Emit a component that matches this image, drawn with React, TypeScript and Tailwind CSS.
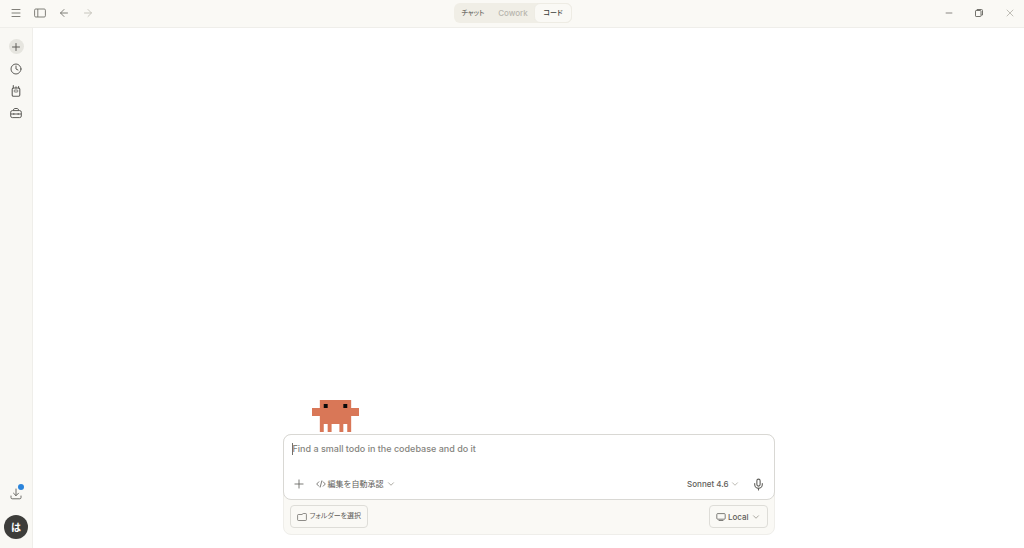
import React, { useState } from 'react';
import { ArrowLeft, ArrowRight, ChevronDown, Clock, Menu, Mic, Minus, Plus, X } from 'lucide-react';
import clsx from 'clsx';

const TABS = [
  { id: 'chat', label: 'チャット', className: 'w-[38px] text-[7px] text-[#73726c]' },
  { id: 'cowork', label: 'Cowork', className: 'w-[42px] text-[8px] text-[#b8b6ae]' },
  { id: 'code', label: 'コード', className: 'w-[38px] text-[7px] text-[#3d3d3a]' },
];

const PanelIcon: React.FC = () => (
  <svg viewBox="0 0 12 10" className="h-[10px] w-3" fill="none" stroke="currentColor" strokeWidth="0.9">
    <rect x="0.6" y="1" width="10.8" height="8" rx="1.2" />
    <path d="M3.8 1v8" />
  </svg>
);

const RestoreIcon: React.FC = () => (
  <svg viewBox="0 0 10 10" className="h-[10px] w-[10px]" fill="none" stroke="currentColor" strokeWidth="1">
    <rect x="1.5" y="2.5" width="5.5" height="6" rx="0.6" />
    <path d="M3 2.5v-1h4.5a1 1 0 0 1 1 1V7H7.2" />
  </svg>
);

const PagerIcon: React.FC = () => (
  <svg viewBox="0 0 12 12" className="h-3 w-3" fill="none" stroke="currentColor" strokeWidth="1.1">
    <path d="M3.3 .6v2.4M6 1.8V3M8.6 1.6V3" strokeLinecap="round" />
    <rect x="2.2" y="3" width="7.6" height="8.2" rx="1.2" />
    <rect x="4.3" y="5" width="3.4" height="2" rx="0.4" strokeWidth="0.8" />
  </svg>
);

const ToolboxIcon: React.FC = () => (
  <svg viewBox="0 0 12 12" className="h-3 w-3" fill="none" stroke="currentColor" strokeWidth="1">
    <path d="M3.2 3.6 3.9 2a.9.9 0 0 1 .8-.5h2.6a.9.9 0 0 1 .8.5l.7 1.6" />
    <rect x="0.7" y="3.6" width="10.6" height="7" rx="1.6" />
    <path d="M.7 7h10.6M3.8 6.1v1.7M8.2 6.1v1.7" />
  </svg>
);

const DownloadIcon: React.FC = () => (
  <svg viewBox="0 0 12 12" className="h-3 w-3" fill="none" stroke="currentColor" strokeWidth="0.9" strokeLinecap="round" strokeLinejoin="round">
    <path d="M6 1v6.5M3.5 5.2 6 7.7l2.5-2.5M1 8v1.6a1.2 1.2 0 0 0 1.2 1.2h7.6A1.2 1.2 0 0 0 11 9.6V8" />
  </svg>
);

const CodeIcon: React.FC = () => (
  <svg viewBox="0 0 10 8" className="h-2 w-[10px]" fill="none" stroke="currentColor" strokeWidth="0.8" strokeLinecap="round" strokeLinejoin="round">
    <path d="M2.8 1.8.7 4l2.1 2.2M7.2 1.8 9.3 4 7.2 6.2M5.8.9 4.2 7.1" />
  </svg>
);

const FolderIcon: React.FC = () => (
  <svg viewBox="0 0 10 8" className="h-2 w-[10px]" fill="none" stroke="currentColor" strokeWidth="0.7">
    <path d="M5 1.5H1.4a.8.8 0 0 0-.8.8v4.4a.8.8 0 0 0 .8.8h7.2a.8.8 0 0 0 .8-.8V1.3a.8.8 0 0 0-.8-.8H6.2L5 1.5z" />
  </svg>
);

const MonitorIcon: React.FC = () => (
  <svg viewBox="0 0 10 8" className="h-2 w-[10px]" fill="none" stroke="currentColor" strokeWidth="0.8">
    <rect x="0.8" y="0.6" width="8.4" height="5.6" rx="0.9" />
    <path d="M3 7.5h4" strokeLinecap="round" />
  </svg>
);

const Mascot: React.FC = () => (
  <svg viewBox="0 0 12 8" className="ml-[29px] h-8 w-[47px]" preserveAspectRatio="none" aria-hidden="true">
    <path fill="#d97757" d="M2 0h8v2h2v2h-2v4H9V6H8v2H7V6H5v2H4V6H3v2H2V4H0V2h2z" />
    <path fill="#0a0a0a" d="M3 1h1v1H3zM8 1h1v1H8z" />
  </svg>
);

const App: React.FC = () => {
  const [activeTab, setActiveTab] = useState('code');
  const [prompt, setPrompt] = useState('');

  return (
    <div className="flex h-screen flex-col bg-white font-['Inter','Noto_Sans_CJK_JP',sans-serif] text-[8px] text-[#3d3d3a]">
      <header className="flex h-7 shrink-0 items-center border-b border-[#efeeea] bg-[#faf9f5] pb-px">
        <div className="flex flex-1 items-center gap-3 pl-[10px] text-[#73726c]">
          <button aria-label="Menu"><Menu className="h-3 w-3" strokeWidth={1.8} /></button>
          <button aria-label="Toggle sidebar"><PanelIcon /></button>
          <button aria-label="Back"><ArrowLeft className="h-3 w-3" strokeWidth={1.8} /></button>
          <button aria-label="Forward" className="text-[#c2c0b8]"><ArrowRight className="h-3 w-3" strokeWidth={1.8} /></button>
        </div>

        <nav className="flex h-5 rounded-md bg-[#f0eee6]">
          {TABS.map(tab => (
            <button
              key={tab.id}
              onClick={() => setActiveTab(tab.id)}
              className={clsx(
                "flex items-center justify-center whitespace-nowrap rounded-md font-medium [font-feature-settings:'palt']",
                tab.className,
                activeTab === tab.id && 'border border-[#eeece4] bg-[#faf9f5]'
              )}
            >
              {tab.label}
            </button>
          ))}
        </nav>

        <div className="flex flex-1 items-center justify-end gap-5 pr-2 text-[#73726c]">
          <button aria-label="Minimize"><Minus className="h-[10px] w-[10px]" strokeWidth={2} /></button>
          <button aria-label="Restore"><RestoreIcon /></button>
          <button aria-label="Close" className="text-[#b0aea6]"><X className="h-3 w-3" strokeWidth={1.6} /></button>
        </div>
      </header>

      <div className="flex min-h-0 flex-1">
        <aside className="flex w-[33px] shrink-0 flex-col items-center justify-between border-r border-[#efeeea] bg-[#f9f8f4] pt-3 pb-[9px]">
          <div className="flex flex-col items-center gap-[10px] text-[#5e5d59]">
            <button aria-label="New session" className="-my-px flex h-[15px] w-[15px] items-center justify-center rounded-full bg-[#e6e5df]">
              <Plus className="h-3 w-3" strokeWidth={2} />
            </button>
            <button aria-label="History"><Clock className="h-3 w-3" strokeWidth={2} /></button>
            <button aria-label="Dispatch"><PagerIcon /></button>
            <button aria-label="Tools"><ToolboxIcon /></button>
          </div>
          <div className="flex flex-col items-center gap-[15px]">
            <button aria-label="Downloads" className="relative text-[#5e5d59]">
              <DownloadIcon />
              <span className="absolute -top-1 -right-[2px] h-[6px] w-[6px] rounded-full bg-[#2b84db]" />
            </button>
            <button className="flex h-6 w-6 items-center justify-center rounded-full bg-[#3d3d3a] text-[10px] font-bold text-white">は</button>
          </div>
        </aside>

        <main className="flex flex-1 flex-col items-center justify-end pb-[13px]">
          <div className="w-full max-w-[492px]">
            <Mascot />
            <div className="mt-[2px] rounded-lg border border-[#efeeea] bg-[#faf9f5]">
              <div className="-mx-px -mt-px rounded-lg border border-[#d9d8d4] bg-white px-2 pt-[7px] pb-2">
                <div className="flex h-[35px] items-start">
                  <span className="mt-px h-3 w-px shrink-0 bg-[#73726c]" />
                  <textarea
                    aria-label="Prompt"
                    rows={1}
                    value={prompt}
                    onChange={(e) => setPrompt(e.target.value)}
                    placeholder="Find a small todo in the codebase and do it"
                    className="h-[14px] flex-1 resize-none overflow-hidden text-[9px] leading-[14px] font-medium outline-none placeholder:text-[#85847e]"
                  />
                </div>
                <div className="flex h-[14px] items-center justify-between text-[#5e5d59]">
                  <div className="flex items-center gap-[10px]">
                    <button aria-label="Add"><Plus className="h-[14px] w-[14px]" strokeWidth={1.4} /></button>
                    <button className="flex items-center gap-[2px]">
                      <CodeIcon />
                      編集を自動承認
                      <ChevronDown className="h-[10px] w-[10px] text-[#9c9a92]" strokeWidth={2} />
                    </button>
                  </div>
                  <div className="flex items-center gap-3">
                    <button className="flex items-center gap-px font-medium">
                      Sonnet 4.6
                      <ChevronDown className="h-[10px] w-[10px] text-[#b0aea6]" strokeWidth={2} />
                    </button>
                    <button aria-label="Voice input" className="mr-px"><Mic className="h-[13px] w-[13px]" strokeWidth={2} /></button>
                  </div>
                </div>
              </div>
              <div className="flex items-center justify-between px-[6px] pt-[5px] pb-[6px]">
                <button className="flex h-[23px] items-center gap-[3px] rounded border border-[#deddd8] px-[6px] text-[7px] text-[#5e5d59]">
                  <FolderIcon />
                  <span className="[font-feature-settings:'palt']">フォルダーを選択</span>
                </button>
                <button className="flex h-[23px] items-center gap-[2px] rounded border border-[#deddd8] px-[6px] font-medium text-[#5e5d59]">
                  <MonitorIcon />
                  Local
                  <ChevronDown className="h-[10px] w-[10px] text-[#9c9a92]" strokeWidth={2} />
                </button>
              </div>
            </div>
          </div>
        </main>
      </div>
    </div>
  );
};

export default App;
